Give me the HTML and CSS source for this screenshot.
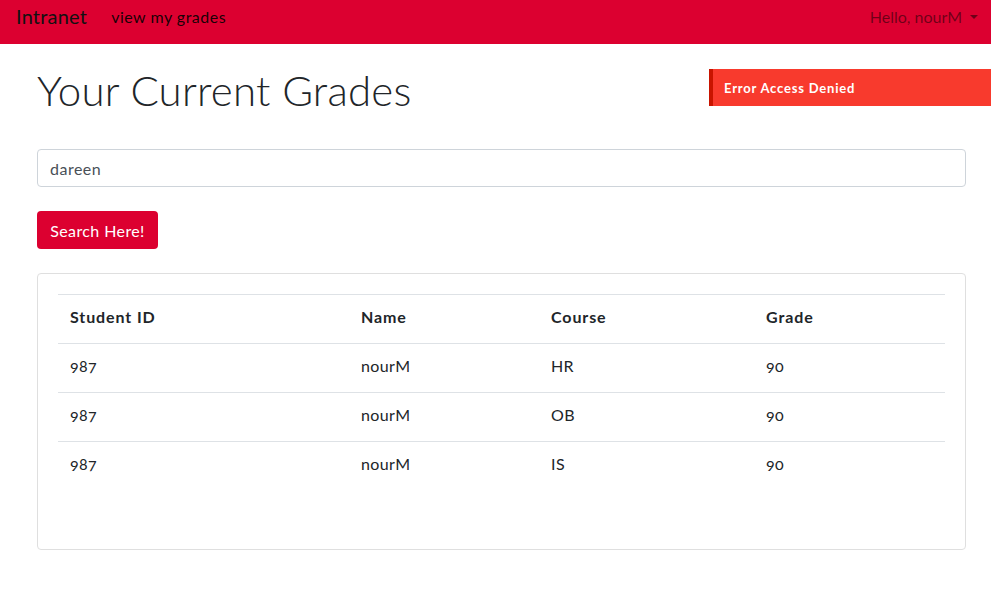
FILE: index.html
```html
<!DOCTYPE html>
<html lang="en">
<head>
<meta charset="utf-8">
<title>Intranet - Grades</title>
<link rel="stylesheet" href="styles.css">
</head>
<body>
<nav class="navbar">
  <a class="brand" href="#">Intranet</a>
  <a class="nav-link active" href="#">view my grades</a>
  <div class="spacer"></div>
  <a class="nav-link user" href="#">Hello, nourM<span class="caret"></span></a>
</nav>
<div class="alert">Error Access Denied</div>
<main class="container">
  <h1 class="title">Your Current Grades</h1>
  <form class="search">
    <input class="field" type="text" value="dareen">
    <button class="btn" type="button">Search Here!</button>
  </form>
  <section class="card">
    <table class="grades">
      <thead>
        <tr><th class="c-id">Student ID</th><th class="c-name">Name</th><th class="c-course">Course</th><th class="c-grade">Grade</th></tr>
      </thead>
      <tbody>
        <tr><td>987</td><td>nourM</td><td>HR</td><td>90</td></tr>
        <tr><td>987</td><td>nourM</td><td>OB</td><td>90</td></tr>
        <tr><td>987</td><td>nourM</td><td>IS</td><td>90</td></tr>
      </tbody>
    </table>
  </section>
</main>
</body>
</html>
```
FILE: styles.css
```css
* { box-sizing: border-box; }
html, body { margin: 0; padding: 0; }
body {
  font-family: Lato, "Open Sans", "Liberation Sans", sans-serif;
  font-size: 16px;
  color: #212529;
  background: #fff;
  font-variant-numeric: oldstyle-nums;
}
a { text-decoration: none; }

.navbar {
  height: 44px;
  background: #dc0030;
  display: flex;
  align-items: flex-start;
  padding: 4px 13px 0 16px;
}
.brand {
  color: #111;
  font-size: 20px;
  line-height: 24px;
  margin-right: 24px;
  letter-spacing: 0.2px;
}
.nav-link {
  font-size: 16px;
  line-height: 24px;
  padding-top: 1px;
  color: rgba(0,0,0,0.5);
}
.nav-link.active { color: rgba(0,0,0,0.9); letter-spacing: 0.5px; }
.spacer { flex: 1; }
.user { display: flex; align-items: center; }
.caret {
  display: inline-block;
  margin-left: 8px;
  width: 0; height: 0;
  border-left: 4px solid transparent;
  border-right: 4px solid transparent;
  border-top: 4px solid rgba(0,0,0,0.5);
}

.alert {
  position: absolute;
  top: 69px;
  left: 709px;
  right: 0;
  height: 37px;
  background: #f83a2d;
  border-left: 4px solid #c81400;
  color: #fff;
  font-size: 13px;
  font-weight: 700;
  letter-spacing: 0.8px;
  display: flex;
  align-items: center;
  padding-left: 11px;
}

.container { padding: 0 25px 0 37px; }
.title {
  margin: 22px 0 35px;
  font-size: 42px;
  line-height: 48px;
  font-weight: 300;
  color: #212529;
  letter-spacing: 0.2px;
}
.search { display: flex; flex-direction: column; align-items: flex-start; }
.field {
  width: 100%;
  height: 38px;
  border: 1px solid #ced4da;
  border-radius: 4px;
  padding: 0 12px;
  font-family: inherit;
  font-size: 16px;
  letter-spacing: 0.5px;
  color: #495057;
  margin-bottom: 24px;
}
.btn {
  height: 38px;
  width: 121px;
  background: #dc0030;
  color: #fff;
  border: 0;
  border-radius: 4px;
  font-family: inherit;
  font-size: 16px;
  letter-spacing: 0.4px;
  padding: 0;
  margin-bottom: 24px;
}

.card {
  border: 1px solid #dfdfdf;
  border-radius: 4px;
  padding: 20px;
}
.grades {
  width: 100%;
  border-collapse: collapse;
  margin-bottom: 39px;
  table-layout: fixed;
}
.grades th, .grades td {
  text-align: left;
  padding: 10px 12px 14px;
  line-height: 24px;
  border-top: 1px solid #dee2e6;
  font-size: 16px;
  color: #212529;
  letter-spacing: 0.4px;
}
.grades th { font-weight: 700; letter-spacing: 0.9px; }
.c-id { width: 291px; }
.c-name { width: 190px; }
.c-course { width: 215px; }
.c-grade { width: 191px; }
```
